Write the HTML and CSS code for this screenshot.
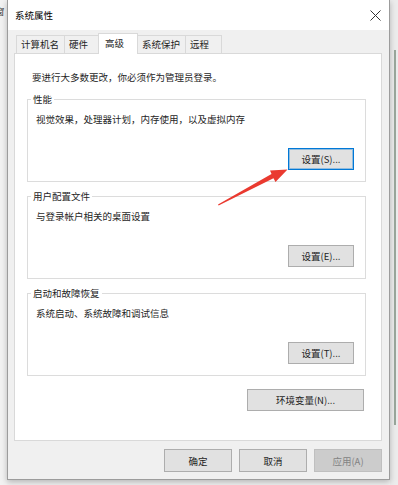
FILE: index.html
```html
<!DOCTYPE html>
<html lang="zh-CN">
<head>
  <meta charset="UTF-8" />
  <title>系统属性</title>
  <link rel="stylesheet" href="styles.css">
</head>
<body>
  <div class="desktop">
    <div class="behind-left"><span class="behind-char">窗</span></div>
    <div class="window">
      <div class="titlebar">
        <span class="title">系统属性</span>
        <svg class="close" width="11" height="11" viewBox="0 0 11 11">
          <path d="M0.5 0.5 L10.5 10.5 M10.5 0.5 L0.5 10.5" stroke="#333" stroke-width="1" fill="none"/>
        </svg>
      </div>
      <div class="dialog-body">
        <div class="tabs">
          <div class="tab">计算机名</div>
          <div class="tab">硬件</div>
          <div class="tab active">高级</div>
          <div class="tab">系统保护</div>
          <div class="tab">远程</div>
        </div>
        <div class="tab-panel">
          <p class="note">要进行大多数更改，你必须作为管理员登录。</p>
          <div class="group">
            <div class="group-title">性能</div>
            <p class="group-text">视觉效果，处理器计划，内存使用，以及虚拟内存</p>
            <div class="group-actions"><button class="btn focused">设置(S)...</button></div>
          </div>
          <div class="group">
            <div class="group-title">用户配置文件</div>
            <p class="group-text">与登录帐户相关的桌面设置</p>
            <div class="group-actions"><button class="btn">设置(E)...</button></div>
          </div>
          <div class="group">
            <div class="group-title">启动和故障恢复</div>
            <p class="group-text">系统启动、系统故障和调试信息</p>
            <div class="group-actions"><button class="btn">设置(T)...</button></div>
          </div>
          <div class="env-row"><button class="btn env">环境变量(N)...</button></div>
        </div>
        <div class="dialog-buttons">
          <button class="btn dlg">确定</button>
          <button class="btn dlg">取消</button>
          <button class="btn dlg" disabled>应用(A)</button>
        </div>
      </div>
    </div>
    <div class="behind-right"><div class="behind-line"></div></div>
  </div>
  <!-- red annotation arrow pointing at the performance settings button -->
  <svg class="arrow" width="398" height="485" viewBox="0 0 398 485">
    <polygon points="218,204.5 271.5,174 270,170.5 287.5,169.5 275.5,182 273.5,178.2 218.6,205.5" fill="#ea3a30"/>
  </svg>
</body>
</html>
```

FILE: styles.css
```css
body {
  margin: 0;
  width: 398px;
  height: 485px;
  overflow: hidden;
  background-color: #f0f0f0;
  font-family: "Noto Sans CJK SC", "Noto Sans", sans-serif;
  font-size: 9.5px;
  color: #1e1e1e;
}
.desktop {
  display: flex;
  height: 485px;
}
.behind-left {
  width: 7px;
  flex: none;
  background-color: #f2f2f2;
  overflow: hidden;
  line-height: 14px;
  padding-top: 4px;
  box-sizing: border-box;
}
.behind-char {
  display: block;
  margin-left: -5px;
  color: #444;
}
.behind-right {
  flex: 1;
  background-color: #ececec;
  padding: 50px 0 0 3px;
  box-sizing: border-box;
}
.behind-line {
  width: 2px;
  height: 375px;
  margin-left: 1px;
  background-color: #9aa79c;
}
.window {
  width: 383px;
  height: 480px;
  flex: none;
  box-sizing: border-box;
  border: 1px solid #9c9c9c;
  border-top: none;
  background-color: #f0f0f0;
  box-shadow: 0 2px 6px rgba(0, 0, 0, 0.25);
  display: flex;
  flex-direction: column;
  position: relative;
}
.titlebar {
  height: 30px;
  background-color: #fff;
  display: flex;
  align-items: center;
  justify-content: space-between;
  padding: 0 7px;
}
.title {
  color: #000;
}
.close {
  display: block;
  margin-right: 1px;
}
.dialog-body {
  padding: 3px 7px 7px 6px;
  display: flex;
  flex-direction: column;
}
.tabs {
  display: flex;
  align-items: flex-end;
  height: 20px;
  padding-left: 2px;
}
.tab {
  height: 18px;
  min-width: 37px;
  box-sizing: border-box;
  padding: 0 5px 0 4px;
  border: 1px solid #d9d9d9;
  border-bottom: none;
  margin-right: -1px;
  background-color: #f0f0f0;
  line-height: 17px;
}
.tab.active {
  height: 21px;
  margin: 0 -2px -1px -2px;
  padding: 0 13px 0 6px;
  background-color: #fff;
  line-height: 18px;
  position: relative;
  z-index: 1;
}
.tab.active + .tab {
  margin-left: 1px;
}
.tab-panel {
  height: 388px;
  box-sizing: border-box;
  background-color: #fff;
  border: 1px solid #d9d9d9;
  padding: 16px 15px 0 12px;
}
.note {
  margin: 0;
  padding-left: 5px;
  line-height: 14px;
}
.group {
  border: 1px solid #dcdcdc;
  margin-top: 15px;
  padding: 0 11px 11px 8px;
}
.group + .group {
  margin-top: 14px;
}
.group-title {
  width: fit-content;
  margin: -8px 0 0 -5px;
  padding: 0 2px;
  background-color: #fff;
  line-height: 14px;
}
.group-text {
  margin: 6px 0 0;
  line-height: 14px;
}
.group-actions {
  display: flex;
  justify-content: flex-end;
  margin-top: 22px;
}
.btn {
  font-family: inherit;
  font-size: 9.5px;
  color: #1e1e1e;
  background-color: #e1e1e1;
  border: 1px solid #adadad;
  height: 22px;
  width: 66px;
  padding: 0;
  box-sizing: border-box;
}
.btn.focused {
  border-color: #0078d7;
  box-shadow: inset 0 0 0 1px rgba(0, 120, 215, 0.35);
}
.env-row {
  display: flex;
  justify-content: flex-end;
  margin: 13px 2px 0 0;
}
.btn.env {
  width: 117px;
}
.dialog-buttons {
  display: flex;
  justify-content: flex-end;
  gap: 7px;
  margin-top: 8px;
}
.btn.dlg {
  width: 68px;
  height: 23px;
}
.btn.dlg:disabled {
  background-color: #cccccc;
  border-color: #bfbfbf;
  color: #838383;
}
.arrow {
  position: absolute;
  left: 0;
  top: 0;
  pointer-events: none;
}
```
